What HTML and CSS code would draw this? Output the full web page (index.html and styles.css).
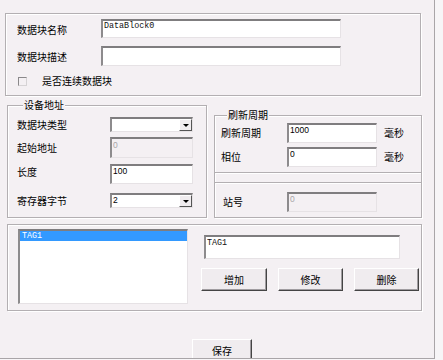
FILE: index.html
```
<!DOCTYPE html>
<html lang="zh-CN">
<head>
    <meta charset="UTF-8">
    <title>数据块设置</title>
    <link rel="stylesheet" href="styles.css">
</head>
<body>
    <div class="window">
        <div class="box box-top">
            <div class="row">
                <span class="label name-label">数据块名称</span>
                <input class="inp mono wide" type="text" value="DataBlock0">
            </div>
            <div class="row row-desc">
                <span class="label name-label">数据块描述</span>
                <input class="inp mono wide tall" type="text" value="">
            </div>
            <div class="row row-check">
                <span class="checkbox"></span>
                <span class="label">是否连续数据块</span>
            </div>
        </div>

        <div class="mid">
            <div class="group group-dev">
                <span class="legend">设备地址</span>
                <div class="row dev-row r1">
                    <span class="label dev-label">数据块类型</span>
                    <div class="combo"><span class="combo-text"></span><span class="combo-btn"><span class="tri"></span></span></div>
                </div>
                <div class="row dev-row r2">
                    <span class="label dev-label">起始地址</span>
                    <input class="inp num dev-inp h21" type="text" value="0" disabled>
                </div>
                <div class="row dev-row r3">
                    <span class="label dev-label">长度</span>
                    <input class="inp num dev-inp" type="text" value="100">
                </div>
                <div class="row dev-row r4">
                    <span class="label dev-label">寄存器字节</span>
                    <div class="combo"><span class="combo-text num">2</span><span class="combo-btn"><span class="tri"></span></span></div>
                </div>
            </div>

            <div class="group group-refresh">
                <span class="legend">刷新周期</span>
                <div class="row ref-row r1">
                    <span class="label ref-label">刷新周期</span>
                    <input class="inp num ref-inp" type="text" value="1000">
                    <span class="label unit">毫秒</span>
                </div>
                <div class="row ref-row r2">
                    <span class="label ref-label">相位</span>
                    <input class="inp num ref-inp" type="text" value="0">
                    <span class="label unit">毫秒</span>
                </div>
                <div class="divider"></div>
                <div class="row ref-row r3">
                    <span class="label ref-label station">站号</span>
                    <input class="inp num ref-inp" type="text" value="0" disabled>
                </div>
            </div>
        </div>

        <div class="box box-tags">
            <div class="listbox">
                <div class="list-item selected">TAG1</div>
            </div>
            <div class="tag-edit">
                <input class="inp mono tag-inp" type="text" value="TAG1">
                <div class="buttons">
                    <button class="btn btn-add">增加</button>
                    <button class="btn btn-mid">修改</button>
                    <button class="btn btn-mid">删除</button>
                </div>
            </div>
        </div>

        <button class="btn btn-save">保存</button>
    </div>
</body>
</html>
```

FILE: styles.css
```
* {
    box-sizing: border-box;
}
body {
    margin: 0;
    background-color: #f7f5f7;
    font-family: "Noto Sans CJK SC", "Noto Sans", sans-serif;
    font-size: 10px;
    color: #000;
}
.window {
    width: 435px;
    height: 359px;
    overflow: hidden;
    padding: 13px 0 0 5px;
    background-color: #f4f0f3;
    border-right: 1px solid #a9a5a8;
    border-bottom: 1px solid #a9a5a8;
}
.box, .group {
    border: 1px solid #b3afb2;
    box-shadow: inset 1px 1px 0 #fff, 1px 1px 0 #fff;
}
.row {
    display: flex;
    align-items: center;
}
.label {
    line-height: 12px;
    white-space: nowrap;
}

/* top block */
.box-top {
    width: 416px;
    height: 83px;
    padding: 5px 0 0 11px;
}
.name-label {
    width: 84px;
    padding-top: 2px;
}
.row-desc {
    margin-top: 8px;
}
.row-check {
    margin-top: 9px;
}
.checkbox {
    width: 9px;
    height: 9px;
    margin: 0 15px 0 1px;
    border: 1px solid #8a888a;
    border-right-color: #d6d3d5;
    border-bottom-color: #d6d3d5;
}

/* inputs */
.inp {
    display: block;
    margin: 0;
    height: 19px;
    padding: 0 1px 7px 1px;
    background-color: #fff;
    border-style: solid;
    border-width: 2px 1px 1px 2px;
    border-color: #7f7d7f #e6e2e5 #e6e2e5 #8d8b8d;
    border-radius: 0;
    outline: none;
    color: #000;
}
.inp:disabled {
    background-color: #f4f0f3;
    color: #a8a6a8;
}
.mono {
    font-family: "Liberation Mono", monospace;
    font-size: 8.4px;
    color: #111;
}
.num {
    font-family: "Liberation Sans", sans-serif;
    font-size: 8.5px;
}
.wide {
    width: 240px;
}
.tall {
    height: 20px;
}

/* middle groups */
.mid {
    display: flex;
    align-items: flex-start;
    margin: 9px 0 0 2px;
}
.legend {
    display: table;
    margin: -7px 0 0 6px;
    padding: 0 1px;
    background-color: #f4f0f3;
    line-height: 12px;
}
.group-dev {
    width: 200px;
    height: 113px;
    padding-left: 9px;
}
.dev-label {
    width: 93px;
}
.dev-row.r1 {
    margin-top: 6px;
}
.dev-row.r2 {
    margin-top: 5px;
}
.dev-row.r3 {
    margin-top: 6px;
}
.dev-row.r3 .dev-label {
    padding-bottom: 4px;
}
.dev-row.r4 {
    margin-top: 9px;
}
.dev-inp {
    width: 83px;
    height: 20px;
}
.h21 {
    height: 21px;
}
.combo {
    display: flex;
    width: 83px;
    height: 15px;
    background-color: #fff;
    border-style: solid;
    border-width: 2px 1px 1px 2px;
    border-color: #7f7d7f #e6e2e5 #e6e2e5 #8d8b8d;
}
.combo-text {
    flex: 1;
    padding: 0 1px;
    line-height: 11px;
}
.combo-btn {
    width: 13px;
    display: flex;
    align-items: center;
    justify-content: center;
    background-color: #f0ecef;
    border: 1px solid;
    border-color: #fff #555 #555 #fff;
}
.tri {
    width: 0;
    height: 0;
    border-left: 3px solid transparent;
    border-right: 3px solid transparent;
    border-top: 3px solid #000;
}
.group-refresh {
    width: 208px;
    height: 103px;
    margin-left: 7px;
    margin-top: 10px;
    padding-left: 6px;
}
.ref-label {
    width: 66px;
}
.ref-label.station {
    padding-left: 2px;
}
.ref-inp {
    width: 90px;
    height: 20px;
}
.unit {
    margin-left: 7px;
}
.ref-row.r1 {
    margin-top: 2px;
}
.ref-row.r2 {
    margin-top: 4px;
}
.ref-row.r3 {
    margin-top: 9px;
}
.divider {
    height: 11px;
    margin: 5px 0 0 -6px;
    border-top: 1px solid #b3afb2;
    border-bottom: 1px solid #b3afb2;
    box-shadow: inset 0 1px 0 #fff, 0 1px 0 #fff;
}

/* tag list */
.box-tags {
    display: flex;
    align-items: flex-start;
    width: 415px;
    height: 87px;
    margin: 6px 0 0 2px;
}
.listbox {
    width: 170px;
    height: 75px;
    margin: 4px 0 0 10px;
    background-color: #fff;
    border-style: solid;
    border-width: 2px 1px 1px 2px;
    border-color: #7f7d7f #e6e2e5 #e6e2e5 #8d8b8d;
}
.list-item {
    height: 10px;
    padding-left: 2px;
    font-family: "Liberation Mono", monospace;
    font-size: 8.4px;
    line-height: 10px;
}
.selected {
    background-color: #3399ff;
    color: #fff;
}
.tag-edit {
    margin: 10px 0 0 16px;
}
.tag-inp {
    width: 196px;
    height: 24px;
    padding-bottom: 10px;
}
.buttons {
    display: flex;
    margin: 9px 0 0 -3px;
}
.btn {
    display: block;
    height: 23px;
    padding: 0;
    font-family: "Noto Sans CJK SC", "Noto Sans", sans-serif;
    font-size: 10px;
    color: #000;
    background-color: #f0ecef;
    border: 1px solid;
    border-color: #fff #444 #444 #fff;
    box-shadow: inset -1px -1px 0 #a09ca0;
    border-radius: 0;
}
.btn-add {
    width: 66px;
}
.btn-mid {
    width: 65px;
    margin-left: 11px;
}
.btn-save {
    width: 60px;
    margin: 28px 0 0 187px;
}
```
